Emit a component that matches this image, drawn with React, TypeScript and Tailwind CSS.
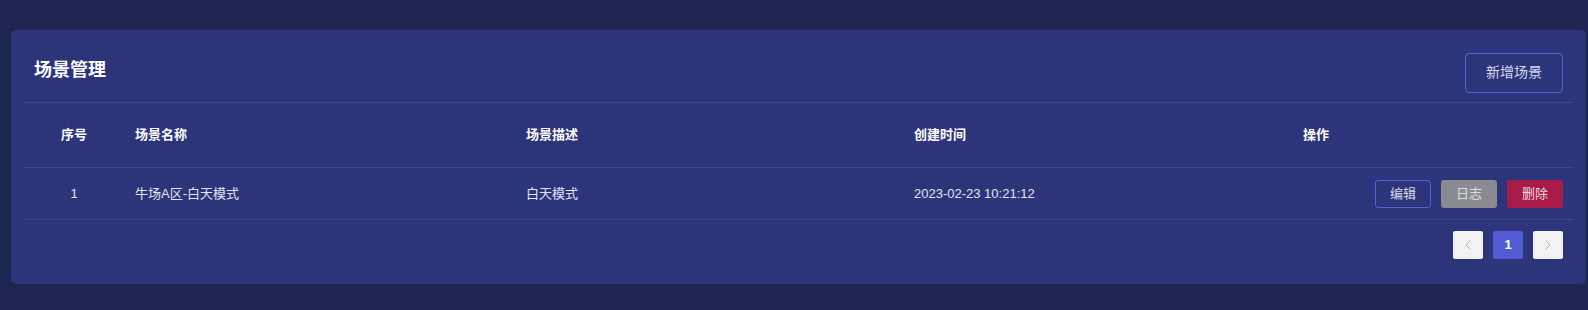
import { ChevronLeft, ChevronRight } from "lucide-react";

const font = { fontFamily: '"Liberation Sans", "Noto Sans CJK SC", sans-serif' };

/* ─── Scene list ─────────────────────────────────────────────────── */
const scenes = [
  { id: 1, name: "牛场A区-白天模式", desc: "白天模式", created: "2023-02-23 10:21:12" },
];

function ActionButton({ label, kind }: { label: string; kind: "edit" | "log" | "del" }) {
  const styles = {
    edit: "border border-[#5460d8] text-[#d6d9f0] bg-transparent",
    log: "bg-[#8a8b90] text-[#dcdde2]",
    del: "bg-[#a81b48] text-[#f0d6de]",
  }[kind];
  return (
    <button className={`w-[56px] h-[28px] rounded-[3px] text-[13px] flex items-center justify-center ${styles}`}>
      {label}
    </button>
  );
}

export default function App() {
  return (
    <div className="w-[1588px] h-[310px] bg-[#1f2552] pt-[30px] pl-[11px] pr-[2px]" style={font}>
      <div className="h-[254px] bg-[#2c357a] rounded-[5px] px-[13px]">
        {/* Header */}
        <div className="h-[73px] flex items-center justify-between border-b border-[#3a449a] pr-[10px]">
          <h1 className="text-[18px] font-bold text-white pl-[10px] pt-[8px]">场景管理</h1>
          <button className="w-[98px] h-[40px] mt-[13px] rounded-[4px] border border-[#5662dc] text-[14px] text-[#d6d9f0]">
            新增场景
          </button>
        </div>

        {/* Table */}
        <div className="grid grid-cols-[100px_390px_388px_390px_1fr] h-[65px] items-center border-b border-[#3a449a] text-[13px] font-bold text-white">
          <div className="text-center">序号</div>
          <div className="pl-[11px]">场景名称</div>
          <div className="pl-[12px]">场景描述</div>
          <div className="pl-[12px]">创建时间</div>
          <div className="pl-[11px]">操作</div>
        </div>
        {scenes.map((s) => (
          <div
            key={s.id}
            className="grid grid-cols-[100px_390px_388px_390px_1fr] h-[52px] items-center border-b border-[#3a449a] text-[13px] text-[#e2e5f3]"
          >
            <div className="text-center">{s.id}</div>
            <div className="pl-[11px]">{s.name}</div>
            <div className="pl-[12px]">{s.desc}</div>
            <div className="pl-[12px]">{s.created}</div>
            <div className="flex justify-end gap-[10px] pr-[10px]">
              <ActionButton label="编辑" kind="edit" />
              <ActionButton label="日志" kind="log" />
              <ActionButton label="删除" kind="del" />
            </div>
          </div>
        ))}

        {/* Pagination */}
        <div className="flex justify-end gap-[10px] pr-[10px] pt-[11px]">
          <button className="w-[30px] h-[28px] rounded-[2px] bg-[#f2f2f3] flex items-center justify-center text-[#b0b3c4]">
            <ChevronLeft className="w-4 h-4" strokeWidth={1.5} />
          </button>
          <button className="w-[30px] h-[28px] rounded-[2px] bg-[#525bd4] text-white text-[13px] font-bold">1</button>
          <button className="w-[30px] h-[28px] rounded-[2px] bg-[#f2f2f3] flex items-center justify-center text-[#b0b3c4]">
            <ChevronRight className="w-4 h-4" strokeWidth={1.5} />
          </button>
        </div>
      </div>
    </div>
  );
}
